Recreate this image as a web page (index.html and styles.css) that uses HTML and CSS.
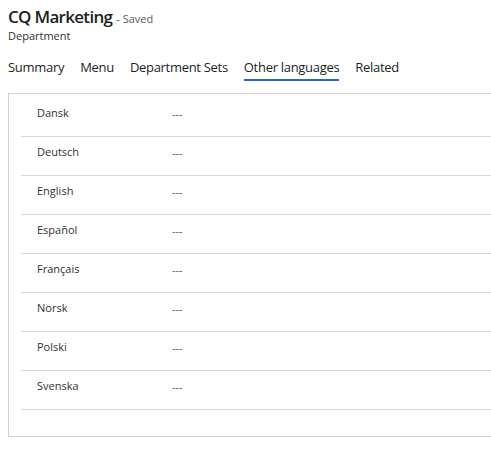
FILE: index.html
```
<!DOCTYPE html>
<html>
<head>
<meta charset="utf-8">
<link rel="stylesheet" href="styles.css">
</head>
<body>
<div class="page">
  <header class="header">
    <div class="title-line">
      <span class="title">CQ Marketing</span>
      <span class="saved">- Saved</span>
    </div>
    <div class="entity">Department</div>
  </header>
  <nav class="tabs">
    <span class="tab">Summary</span>
    <span class="tab">Menu</span>
    <span class="tab">Department Sets</span>
    <span class="tab active">Other languages</span>
    <span class="tab">Related</span>
  </nav>
  <section class="card">
    <div class="row"><span class="label">Dansk</span><span class="value">---</span></div>
    <div class="row"><span class="label">Deutsch</span><span class="value">---</span></div>
    <div class="row"><span class="label">English</span><span class="value">---</span></div>
    <div class="row"><span class="label">Español</span><span class="value">---</span></div>
    <div class="row"><span class="label">Français</span><span class="value">---</span></div>
    <div class="row"><span class="label">Norsk</span><span class="value">---</span></div>
    <div class="row"><span class="label">Polski</span><span class="value">---</span></div>
    <div class="row"><span class="label">Svenska</span><span class="value">---</span></div>
  </section>
</div>
</body>
</html>
```
FILE: styles.css
```
html, body {
  margin: 0;
  padding: 0;
  background: #ffffff;
  overflow: hidden;
}
body {
  font-family: "Open Sans", "Noto Sans", sans-serif;
  color: #323130;
}
.page {
  padding: 6px 0 0 8px;
  width: 500px;
}
.header {
  display: flex;
  flex-direction: column;
}
.title-line {
  display: flex;
  align-items: baseline;
  gap: 4px;
  height: 21px;
  line-height: 21px;
}
.title {
  font-size: 17px;
  font-weight: 600;
  color: #201f1e;
  letter-spacing: -0.7px;
}
.saved {
  font-size: 11px;
  color: #605e5c;
}
.entity {
  font-size: 11px;
  line-height: 13px;
  margin-top: 2px;
  color: #323130;
}
.tabs {
  display: flex;
  margin-top: 12px;
  margin-bottom: 12px;
}
.tab {
  font-size: 13px;
  line-height: 23px;
  padding-top: 2px;
  margin-right: 16px;
  color: #201f1e;
  letter-spacing: -0.3px;
  border-bottom: 2px solid transparent;
}
.tab.active {
  border-bottom-color: #2266e3;
}
.card {
  border: 1px solid #d1d1d1;
  padding: 4px 0 26px 12px;
  display: flex;
  flex-direction: column;
}
.row {
  display: flex;
  height: 38px;
  border-bottom: 1px solid #d8d8d8;
  padding-left: 16px;
}
.label {
  width: 135px;
  font-size: 11px;
  line-height: 16px;
  padding-top: 7px;
  color: #323130;
}
.value {
  font-size: 11px;
  line-height: 16px;
  padding-top: 8px;
  color: #605e5c;
}
```
